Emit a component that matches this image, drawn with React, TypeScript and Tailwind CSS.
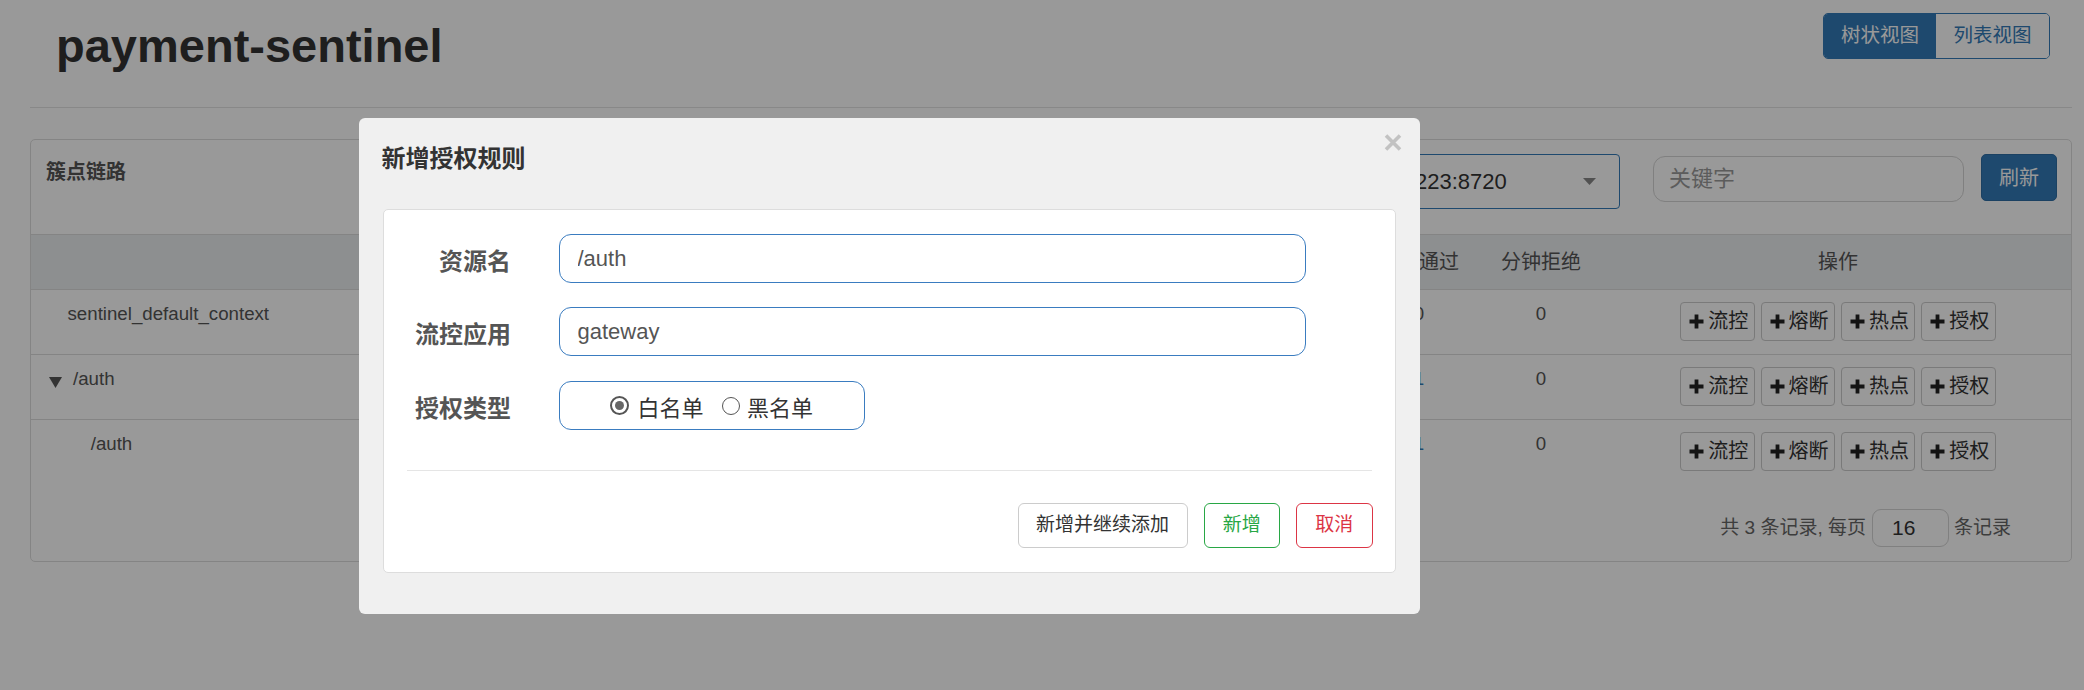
import React from 'react'

const ops = ['流控', '熔断', '热点', '授权']

const rows = [
  { name: 'sentinel_default_context', level: 0, pass: '0', blue: false },
  { name: '/auth', level: 1, pass: '1', blue: true },
  { name: '/auth', level: 2, pass: '1', blue: true },
]

const cols = 'grid grid-cols-[769px_135px_135px_130px_161px_116px_128px_1fr]'

function PlusIcon() {
  return (
    <svg width="15" height="15" viewBox="0 0 15 15" className="shrink-0">
      <path d="M5.6 0.5h3.8v5.1h5.1v3.8H9.4v5.1H5.6V9.4H0.5V5.6h5.1z" fill="#222" />
    </svg>
  )
}

function Caret() {
  return (
    <svg width="13" height="11" viewBox="0 0 13 11" className="shrink-0">
      <path d="M0 0h13L6.5 11z" fill="#555" />
    </svg>
  )
}

export default function App() {
  return (
    <div className="relative h-[690px] overflow-hidden bg-white font-['Liberation_Sans','Noto_Sans_CJK_SC',sans-serif]">
      <div className="pl-[30px] pr-[12px]">
        {/* page header */}
        <div className="flex justify-between items-start pt-[13px] pl-[26px] h-[108px] border-b border-[#e3e3e3]">
          <h1 className="mt-[7px] text-[47px] leading-[52px] font-bold text-[#333]">payment-sentinel</h1>
          <div className="flex h-[46px] mr-[22px] rounded-[5px] overflow-hidden border border-[#337ab7] text-[19.5px]">
            <div className="w-[112px] flex items-center justify-center bg-[#337ab7] text-white">树状视图</div>
            <div className="w-[113px] flex items-center justify-center bg-white text-[#337ab7]">列表视图</div>
          </div>
        </div>

        {/* card */}
        <div className="mt-[31px] border border-[#ddd] rounded-[5px] bg-white">
          <div className="flex items-start h-[95px] pl-[15px] pr-[14px] pt-[14px] border-b border-[#ddd]">
            <div className="mt-[3px] text-[20px] leading-[30px] font-bold text-[#555]">簇点链路</div>
            <div className="ml-auto flex items-start">
              <div className="w-[329px] h-[55px] flex items-center justify-between pl-[19px] pr-[23px] border border-[#337ab7] rounded-[4px] text-[22px] text-[#333]">
                <span>192.168.1.223:8720</span>
                <svg width="13" height="7" viewBox="0 0 13 7">
                  <path d="M0 0h13L6.5 7z" fill="#888" />
                </svg>
              </div>
              <input
                readOnly
                placeholder="关键字"
                className="ml-[33px] mt-[2px] w-[311px] h-[46px] pl-[15px] border border-[#d5d5d5] rounded-[12px] text-[22px] outline-none placeholder:text-[#999]"
              />
              <button className="ml-[17px] w-[76px] h-[47px] rounded-[5px] bg-[#337ab7] border border-[#2e6da4] text-white text-[20px]">
                刷新
              </button>
            </div>
          </div>

          {/* table head */}
          <div className={`${cols} h-[54px] items-center bg-[#eceef1] text-[20px] text-[#555] text-center`}>
            <div />
            <div>通过QPS</div>
            <div>拒绝QPS</div>
            <div>并发数</div>
            <div>平均RT</div>
            <div>分钟通过</div>
            <div>分钟拒绝</div>
            <div>操作</div>
          </div>

          {/* table rows */}
          {rows.map((r, i) => (
            <div key={i} className={`${cols} h-[65px] items-start border-t border-[#ddd] text-[18.7px] leading-[22px] text-[#555]`}>
              <div className="flex items-start pt-[13px]">
                {r.level === 0 && <span className="ml-[36.5px]">{r.name}</span>}
                {r.level === 1 && (
                  <>
                    <span className="ml-[18px] mt-[8.5px]">
                      <Caret />
                    </span>
                    <span className="ml-[11px]">{r.name}</span>
                  </>
                )}
                {r.level === 2 && <span className="ml-[59.7px]">{r.name}</span>}
              </div>
              <div className="pt-[13px] text-center">0</div>
              <div className="pt-[13px] text-center">0</div>
              <div className="pt-[13px] text-center">0</div>
              <div className="pt-[13px] text-center">0</div>
              <div className={`pt-[13px] text-center ${r.blue ? 'text-[#337ab7]' : ''}`}>{r.pass}</div>
              <div className="pt-[13px] text-center">0</div>
              <div className="pt-[12px] flex justify-center gap-[5.8px]">
                {ops.map((o) => (
                  <button
                    key={o}
                    className="w-[74.5px] h-[38.5px] flex items-center pl-[8px] gap-[4px] bg-white border border-[#ccc] rounded-[4px] text-[20px] text-[#333]"
                  >
                    <PlusIcon />
                    <span>{o}</span>
                  </button>
                ))}
              </div>
            </div>
          ))}

          {/* pagination */}
          <div className="flex justify-end items-center mt-[25px] pb-[14px] pr-[60px] text-[19px] text-[#666]">
            <span>共 3 条记录, 每页</span>
            <input
              readOnly
              value="16"
              className="ml-[6px] w-[77px] h-[38px] pl-[19px] border border-[#d5d5d5] rounded-[9px] text-[21px] text-[#333] outline-none"
            />
            <span className="ml-[5px]">条记录</span>
          </div>
        </div>
      </div>

      {/* modal backdrop */}
      <div className="absolute inset-0 bg-black/40" />

      {/* modal */}
      <div className="absolute left-[358.5px] top-[118px] w-[1061.5px] h-[496px] bg-[#f0f0f0] rounded-[6px]">
        <div className="flex justify-between items-start pt-[16px] pl-[23px] pr-[18px]">
          <div className="mt-[7px] text-[24px] leading-[36px] font-bold text-[#333]">新增授权规则</div>
          <svg width="18" height="17" viewBox="0 0 18 17">
            <path d="M2 1.5L16 15.5M16 1.5L2 15.5" stroke="#c2c2c2" strokeWidth="3.6" />
          </svg>
        </div>

        <div className="mx-[24px] mt-[32px] h-[364px] bg-white border border-[#ddd] rounded-[5px] pt-[24px]">
          <div className="flex items-center h-[49px]">
            <div className="w-[127.5px] pt-[7px] text-right text-[24px] font-bold text-[#555]">资源名</div>
            <input
              readOnly
              value="/auth"
              className="ml-[48px] w-[747px] h-[49px] px-[17.5px] border border-[#3a7cc0] rounded-[12px] text-[22px] text-[#555] outline-none"
            />
          </div>
          <div className="flex items-center h-[49px] mt-[24px]">
            <div className="w-[127.5px] pt-[7px] text-right text-[24px] font-bold text-[#555]">流控应用</div>
            <input
              readOnly
              value="gateway"
              className="ml-[48px] w-[747px] h-[49px] px-[17.5px] border border-[#3a7cc0] rounded-[12px] text-[22px] text-[#555] outline-none"
            />
          </div>
          <div className="flex items-center h-[49px] mt-[25px]">
            <div className="w-[127.5px] pt-[7px] text-right text-[24px] font-bold text-[#555]">授权类型</div>
            <div className="ml-[48px] w-[305.5px] h-[49px] flex items-center justify-center border border-[#3a7cc0] rounded-[12px] text-[22px] text-[#333]">
              <span className="w-[19px] h-[19px] rounded-full border-[2px] border-[#555] flex items-center justify-center">
                <span className="w-[9px] h-[9px] rounded-full bg-[#666]" />
              </span>
              <span className="ml-[8px] pt-[6px]">白名单</span>
              <span className="ml-[18.5px] w-[18px] h-[18px] rounded-full border border-[#555] bg-white" />
              <span className="ml-[7px] pt-[6px]">黑名单</span>
            </div>
          </div>

          <div className="mx-[23px] mt-[40px] h-px bg-[#e5e5e5]" />

          <div className="flex justify-end gap-[16px] mt-[32px] pr-[22.5px] text-[19px]">
            <button className="w-[170px] h-[45px] bg-white border border-[#ccc] rounded-[6px] text-[#333]">新增并继续添加</button>
            <button className="w-[76.5px] h-[45px] bg-white border border-[#28a745] rounded-[6px] text-[#28a745]">新增</button>
            <button className="w-[76.5px] h-[45px] bg-white border border-[#dc3545] rounded-[6px] text-[#dc3545]">取消</button>
          </div>
        </div>
      </div>
    </div>
  )
}
